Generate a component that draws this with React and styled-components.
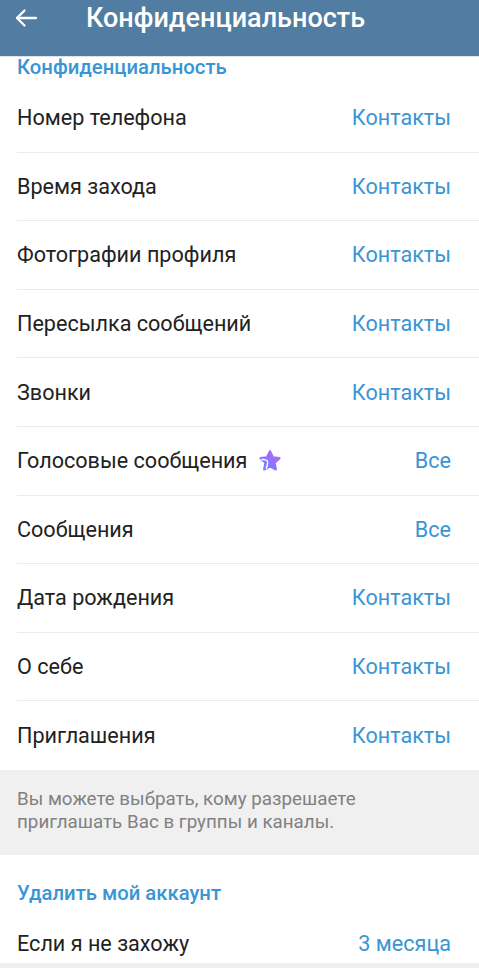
import React from "react";
import styled, { createGlobalStyle } from "styled-components";

const Global = createGlobalStyle`
  html, body { margin: 0; padding: 0; background: #f0f0f0; }
  body { font-family: Roboto, "Noto Sans", Arial, sans-serif; -webkit-font-smoothing: antialiased; }
  * { box-sizing: border-box; }
`;

const Page = styled.div`
  width: 479px;
  min-height: 968px;
  display: flex;
  flex-direction: column;
  background: #f0f0f0;
`;

const Header = styled.header`
  height: 56px;
  background: #517da2;
  display: flex;
  align-items: flex-start;
  padding: 4px 0 0 14px;
  gap: 48px;
  box-shadow: 0 1px 0 #dde3ea;
  position: relative;
  z-index: 1;
`;

const BackButton = styled.div`
  width: 24px;
  height: 24px;
  margin-top: 2px;
  display: flex;
  align-items: center;
  justify-content: center;
`;

const HeaderTitle = styled.h1`
  margin: 0;
  font-size: 27px;
  line-height: 28px;
  font-weight: 500;
  color: #fff;
`;

const Section = styled.section`
  background: #fff;
  display: flex;
  flex-direction: column;
`;

const SectionTitle = styled.div`
  height: ${(p) => p.$h}px;
  padding: ${(p) => p.$top}px 17px 0;
  font-size: 20.3px;
  line-height: 22px;
  font-weight: 500;
  color: #3a95d5;
`;

const Row = styled.div`
  height: ${(p) => p.$h || 68.6}px;
  margin-left: 17px;
  padding: ${(p) => p.$top || 0}px 28px 0 0;
  display: flex;
  align-items: center;
  justify-content: space-between;
  border-bottom: ${(p) => (p.$last ? "none" : "1px solid #ebebeb")};
`;

const Label = styled.span`
  display: flex;
  align-items: center;
  gap: 10px;
  font-size: 21.6px;
  color: #222;
`;

const Value = styled.span`
  font-size: 21.6px;
  color: #3a95d5;
`;

const Info = styled.div`
  padding: 18px 17px 21px;
  font-size: 18.8px;
  line-height: 23px;
  color: #818181;
  background: #f0f0f0;
`;

const BackArrow = () => (
  <svg width="24" height="24" viewBox="0 0 24 24" fill="none" stroke="#fff" strokeWidth="2.3" strokeLinecap="round" strokeLinejoin="round">
    <path d="M22 12H3" />
    <path d="M10.5 4.5L3 12l7.5 7.5" />
  </svg>
);

const PremiumStar = () => (
  <svg width="26" height="26" viewBox="0 0 24 24">
    <defs>
      <linearGradient id="ps" x1="0" y1="1" x2="1" y2="0">
        <stop offset="0" stopColor="#6a86ff" />
        <stop offset="0.5" stopColor="#8f73ff" />
        <stop offset="1" stopColor="#c16be8" />
      </linearGradient>
    </defs>
    <path
      d="M12 3l2.7 5.6 6.1.8-4.5 4.3 1.1 6.1L12 16.9l-5.4 2.9 1.1-6.1-4.5-4.3 6.1-.8z"
      fill="url(#ps)"
      stroke="url(#ps)"
      strokeWidth="2"
      strokeLinejoin="round"
    />
    <path d="M4.5 10.6c4.2-.3 7.2.6 4 8" fill="none" stroke="#fff" strokeWidth="1.3" strokeLinecap="round" />
  </svg>
);

const rows = [
  ["Номер телефона", "Контакты"],
  ["Время захода", "Контакты"],
  ["Фотографии профиля", "Контакты"],
  ["Пересылка сообщений", "Контакты"],
  ["Звонки", "Контакты"],
  ["Голосовые сообщения", "Все", true],
  ["Сообщения", "Все"],
  ["Дата рождения", "Контакты"],
  ["О себе", "Контакты"],
  ["Приглашения", "Контакты"],
];

export default function App() {
  return (
    <Page>
      <Global />
      <Header>
        <BackButton>
          <BackArrow />
        </BackButton>
        <HeaderTitle>Конфиденциальность</HeaderTitle>
      </Header>
      <Section>
        <SectionTitle $h={28} $top={0}>Конфиденциальность</SectionTitle>
        {rows.map(([label, value, star], i) => (
          <Row key={label} $last={i === rows.length - 1}>
            <Label>
              {label}
              {star && <PremiumStar />}
            </Label>
            <Value>{value}</Value>
          </Row>
        ))}
      </Section>
      <Info>
        Вы можете выбрать, кому разрешаете
        <br />
        приглашать Вас в группы и каналы.
      </Info>
      <Section>
        <SectionTitle $h={62} $top={27}>Удалить мой аккаунт</SectionTitle>
        <Row $h={46} $top={8} $last>
          <Label>Если я не захожу</Label>
          <Value>3 месяца</Value>
        </Row>
      </Section>
    </Page>
  );
}
